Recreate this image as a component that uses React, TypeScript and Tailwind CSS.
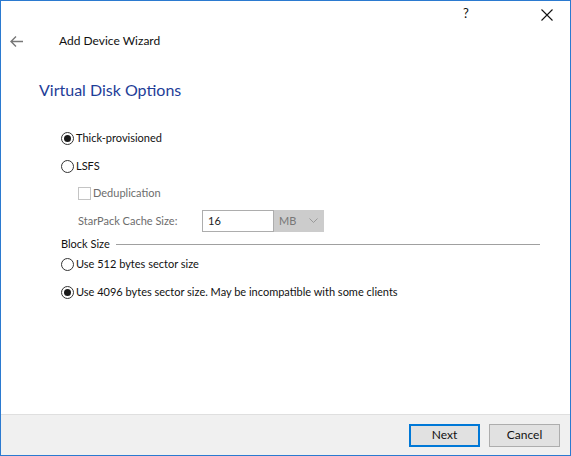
import React from "react";

const Radio = ({ checked }: { checked?: boolean }) => (
  <span className="w-[13px] h-[13px] rounded-full border border-[#333] bg-white flex items-center justify-center shrink-0">
    {checked && <span className="w-[7px] h-[7px] rounded-full bg-[#1a1a1a]" />}
  </span>
);

export default function App() {
  return (
    <div
      className="w-[571px] h-[456px] border border-[#2b7ad0] bg-white flex flex-col text-[11px] text-[#111]"
      style={{ fontFamily: '"Segoe UI", "Lato", "Liberation Sans", sans-serif' }}
    >
      <div className="h-[28px] flex items-center justify-end shrink-0">
        <span className="w-[30px] text-center text-[13px] mr-[51px] mt-[-2px]">?</span>
        <span className="w-[30px] flex justify-center mr-[8px]">
          <svg width="12" height="12" viewBox="0 0 12 12">
            <path d="M0.5 0.5 L11.5 11.5 M11.5 0.5 L0.5 11.5" stroke="#111" strokeWidth="1.1" />
          </svg>
        </span>
      </div>
      <div className="h-[24px] flex items-center shrink-0">
        <span className="w-[58px] pl-[9px] flex items-center">
          <svg width="13" height="11" viewBox="0 0 13 11">
            <path d="M6 0.5 L1 5.5 L6 10.5 M1 5.5 L13 5.5" stroke="#777" strokeWidth="1.4" fill="none" />
          </svg>
        </span>
        <span className="text-[12px]">Add Device Wizard</span>
      </div>
      <div className="flex-1 flex flex-col">
        <div className="pl-[38px] mt-[26px] text-[16px] text-[#1e3d98] leading-[22px]">Virtual Disk Options</div>
        <div className="pl-[60px] mt-[29px] flex flex-col">
          <label className="flex items-center gap-[2px] h-[16px]">
            <Radio checked />
            <span>Thick-provisioned</span>
          </label>
          <label className="flex items-center gap-[2px] h-[16px] mt-[12px]">
            <Radio />
            <span>LSFS</span>
          </label>
          <div className="pl-[17px] flex flex-col text-[#6d6d6d]">
            <label className="flex items-center gap-[2px] h-[16px] mt-[11px]">
              <span className="w-[13px] h-[13px] border border-[#c4c4c4] bg-white shrink-0" />
              <span>Deduplication</span>
            </label>
            <div className="flex items-center mt-[9px] h-[22px]">
              <span className="w-[124px]">StarPack Cache Size:</span>
              <div className="w-[72px] h-[22px] border border-[#adadad] flex items-center pl-[5px] text-[#222] bg-white">16</div>
              <div className="w-[50px] h-[22px] bg-[#cccccc] border border-[#cccccc] flex items-center justify-between pl-[4px] pr-[5px] text-[#777]">
                <span>MB</span>
                <svg width="9" height="6" viewBox="0 0 9 6">
                  <path d="M0.5 0.5 L4.5 4.5 L8.5 0.5" stroke="#999" fill="none" />
                </svg>
              </div>
            </div>
          </div>
          <div className="flex items-center mt-[4px] h-[16px] mr-[30px]">
            <span>Block Size</span>
            <span className="flex-1 h-px bg-[#a0a0a0] ml-[6px]" />
          </div>
          <label className="flex items-center gap-[2px] h-[16px] mt-[4px]">
            <Radio />
            <span>Use 512 bytes sector size</span>
          </label>
          <label className="flex items-center gap-[2px] h-[16px] mt-[12px]">
            <Radio checked />
            <span>Use 4096 bytes sector size. May be incompatible with some clients</span>
          </label>
        </div>
      </div>
      <div className="h-[41px] shrink-0 border-t border-[#dfdfdf] bg-[#f0f0f0] flex items-center justify-end gap-[9px] pr-[10px] text-[12px]">
        <button className="w-[71px] h-[23px] border-2 border-[#0078d7] bg-[#e1e1e1] flex items-center justify-center">Next</button>
        <button className="w-[71px] h-[23px] border border-[#adadad] bg-[#e1e1e1] flex items-center justify-center">Cancel</button>
      </div>
    </div>
  );
}
